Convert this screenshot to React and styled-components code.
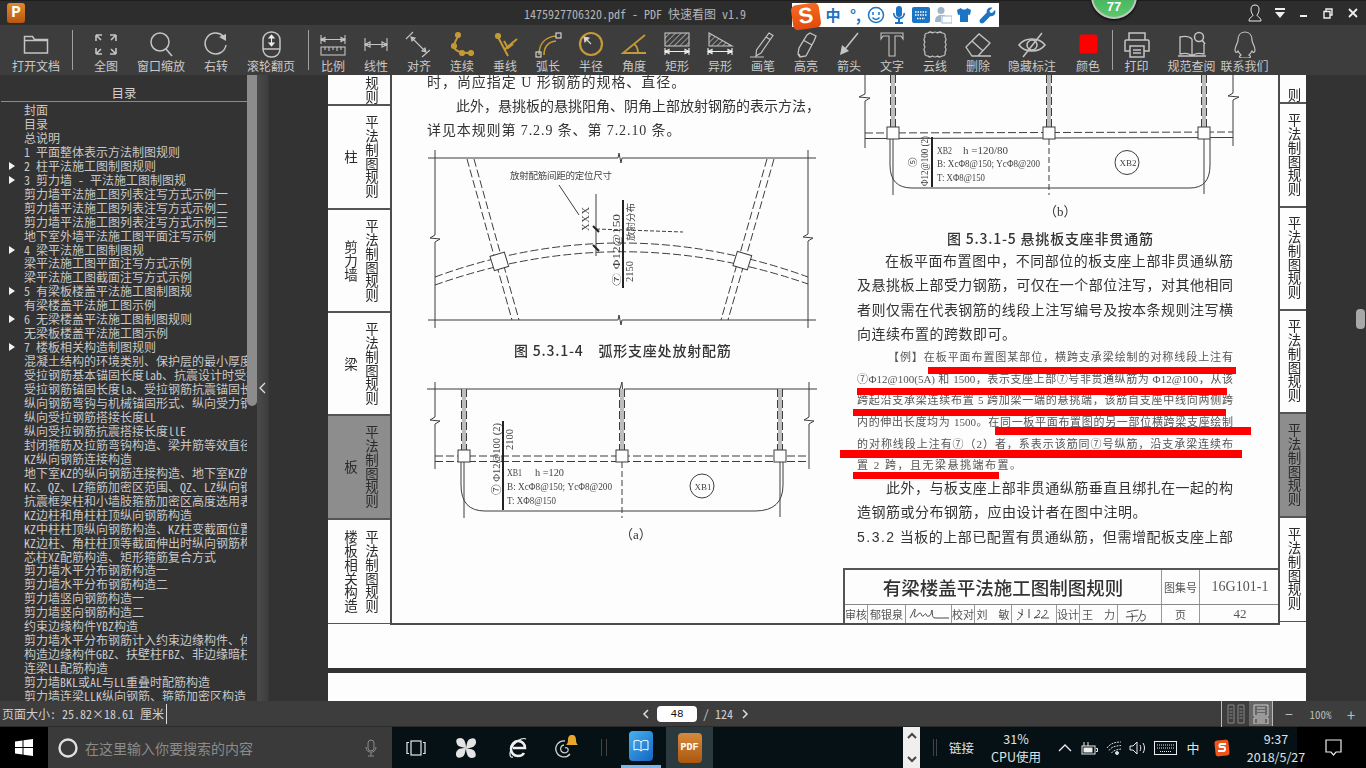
import styled, { createGlobalStyle } from 'styled-components';

const CJK = '"Noto Sans CJK SC", "Noto Sans", sans-serif';
const SCAN = '"Liberation Serif", "Noto Sans CJK SC", serif';

const Global = createGlobalStyle`
  html, body { margin: 0; padding: 0; background: #333; overflow: hidden; }
  * { box-sizing: border-box; }
`;

const Shell = styled.div`
  width: 1366px;
  height: 768px;
  overflow: hidden;
  position: relative;
  font-family: ${CJK};
  color: #d4d4d4;
  font-size: 12px;
`;

/* title bar */
const TitleBar = styled.div`
  height: 25px;
  background: #2d2d2d;
  border-top: 1px solid #1e1e1e;
  display: flex;
  align-items: center;
  position: relative;
`;
const AppLogo = styled.div`
  width: 18px;
  height: 20px;
  margin-left: 7px;
  border-radius: 3px;
  background: linear-gradient(#e08a2c, #b9560f);
  color: #fff;
  font: bold 16px/20px "Liberation Mono", monospace;
  text-align: center;
`;
const TitleText = styled.div`
  margin-left: 499px;
  font-size: 12px;
  color: #b4b4b4;
  font-feature-settings: "hwid";
  white-space: nowrap;
`;
const WinControls = styled.div`
  margin-left: auto;
  margin-right: 1px;
  display: flex;
`;
const WinBtn = styled.div`
  width: 24.4px;
  height: 24px;
  display: flex;
  align-items: center;
  justify-content: center;
  color: #eee;
`;
const ImeBar = styled.div`
  position: absolute;
  left: 792px;
  top: 2px;
  width: 207px;
  height: 24px;
  background: #fff;
  display: flex;
  align-items: center;
  color: #1b74c4;
  z-index: 5;
`;
const ImeLogo = styled.div`
  width: 28px;
  height: 25px;
  margin-top: 2px;
  border-radius: 5px;
  background: linear-gradient(#f5691f, #e24a0e);
  color: #fff;
  font: bold 22px/24px "Liberation Sans", sans-serif;
  text-align: center;
  transform: rotate(-8deg);
`;
const ImeCell = styled.div`
  width: ${(p) => p.$w}px;
  display: flex;
  justify-content: center;
  font-size: 15px;
  font-weight: 700;
  line-height: 20px;
`;
const ScoreBadge = styled.div`
  position: absolute;
  left: 1091px;
  top: -28px;
  width: 46px;
  height: 46px;
  border-radius: 50%;
  background: linear-gradient(#2f9f4c, #5cc86e);
  border: 2px solid #bfc7bf;
  box-shadow: 0 1px 3px #000;
  color: #fff;
  font: 700 13px/1 "Liberation Sans", sans-serif;
  display: flex;
  align-items: flex-end;
  justify-content: center;
  padding-bottom: 4px;
  z-index: 6;
`;

/* tool bar */
const ToolBar = styled.div`
  height: 50px;
  background: #3d3d3d;
  display: flex;
  align-items: flex-start;
`;
const Tool = styled.div`
  width: ${(p) => p.$w}px;
  flex: none;
  height: 50px;
  padding-top: 5px;
  display: flex;
  flex-direction: column;
  align-items: center;
  color: #c4c4c4;
  svg { display: block; }
`;
const ToolLabel = styled.div`
  font-size: 12px;
  line-height: 16px;
  white-space: nowrap;
  color: #c9c9c9;
`;
const ToolSep = styled.div`
  width: 1px;
  height: 40px;
  margin: 5px ${(p) => p.$after || 0}px 0 ${(p) => p.$before || 0}px;
  background: #a0a0a0;
  flex: none;
`;

/* middle */
const Main = styled.div`
  height: 626px;
  display: flex;
  background: #333;
  position: relative;
`;
const Sidebar = styled.div`
  width: 247px;
  flex: none;
  overflow: hidden;
  padding-left: 1px;
`;
const SideHead = styled.div`
  height: 27px;
  line-height: 36px;
  text-align: center;
  font-size: 12.5px;
  border-bottom: 1px solid #8b8b8b;
  color: #d0d0d0;
`;
const TocList = styled.div`
  padding-top: 1px;
`;
const TocRow = styled.div`
  height: 13.96px;
  line-height: 14px;
  padding-left: 23px;
  white-space: nowrap;
  position: relative;
  font-size: 12px;
  color: #c8c8c8;
  font-feature-settings: "hwid";
`;
const TocArrow = styled.i`
  position: absolute;
  left: 8px;
  top: 3px;
  border-left: 6px solid #f2f2f2;
  border-top: 4.5px solid transparent;
  border-bottom: 4.5px solid transparent;
`;
const TocNum = styled.span`
  display: inline-block;
  width: 12px;
`;
const SideThumbTrack = styled.div`
  width: 10px;
  flex: none;
`;
const SideThumb = styled.div`
  height: 331px;
  background: #8c8c8c;
  border-radius: 0 0 5px 5px;
`;
const SideGutter = styled.div`
  width: 71px;
  flex: none;
  display: flex;
  align-items: center;
  background: linear-gradient(90deg, #4a4a4a, #3e3e3e 11px, #333 12px);
`;
const Viewer = styled.div`
  width: 978px;
  flex: none;
  display: flex;
  flex-direction: column;
  gap: 5px;
`;
const Paper = styled.div`
  background: #fdfdfd;
  height: ${(p) => p.$h}px;
  flex: none;
  overflow: hidden;
`;
const Scan = styled.div`
  display: flex;
  height: 550px;
  filter: blur(0.35px);
  font-family: ${CJK};
  color: #3a3a3a;
`;
const TabColumn = styled.div`
  width: ${(p) => p.$w}px;
  flex: none;
`;
const Tab = styled.div`
  height: ${(p) => p.$h}px;
  background: ${(p) => (p.$active ? '#8d8d8d' : 'transparent')};
  border-bottom: ${(p) => (p.$last ? '1px' : '2px')} solid #555;
  display: flex;
  justify-content: ${(p) => (p.$side ? 'center' : 'flex-end')};
  align-items: ${(p) => (p.$cut ? 'flex-end' : 'center')};
  padding-right: ${(p) => (p.$side ? 0 : 11)}px;
  padding-left: ${(p) => (p.$side ? 3 : 0)}px;
  overflow: hidden;
  gap: 7px;
  color: #2b2b2b;
`;
const TabWord = styled.div`
  writing-mode: vertical-rl;
  text-orientation: upright;
  font-size: 13.5px;
  line-height: 14px;
  letter-spacing: 0.4px;
  white-space: nowrap;
`;
const Body = styled.div`
  width: 890px;
  flex: none;
  height: 550px;
  border-left: 2px solid #4c4c4c;
  border-right: 2px solid #4c4c4c;
  border-bottom: 2px solid #4c4c4c;
  display: flex;
  padding-left: 35px;
  overflow: hidden;
`;
const LeftCol = styled.div`
  width: 430px;
  flex: none;
  margin-top: -4px;
`;
const RightCol = styled.div`
  width: 421px;
  flex: none;
  display: flex;
  flex-direction: column;
`;
const Line = styled.div`
  width: ${(p) => p.$w || 388}px;
  height: ${(p) => p.$lh || 24}px;
  line-height: ${(p) => p.$lh || 24}px;
  padding-left: ${(p) => p.$indent || 0}px;
  margin-top: ${(p) => p.$top || 0}px;
  font-family: ${SCAN};
  font-size: ${(p) => p.$size || 14}px;
  letter-spacing: ${(p) => p.$ls || 0}px;
  white-space: nowrap;
  overflow: visible;
  color: ${(p) => p.$color || '#333'};
  text-align: ${(p) => (p.$fit ? 'justify' : 'left')};
  text-align-last: ${(p) => (p.$fit ? 'justify' : 'auto')};
  text-justify: inter-character;
`;
const SectionNo = styled.span`
  font-family: "Liberation Sans", sans-serif;
  letter-spacing: 1.5px;
`;
const Caption = styled.div`
  height: 20px;
  line-height: 20px;
  padding-left: ${(p) => p.$pad || 0}px;
  margin-top: ${(p) => p.$top || 0}px;
  font-size: 14px;
  font-weight: 500;
  letter-spacing: 0.8px;
  color: #333;
  white-space: pre;
`;
const SubCaption = styled.div`
  height: 20px;
  line-height: 20px;
  padding-left: ${(p) => p.$pad}px;
  font-family: ${SCAN};
  font-size: 13px;
  color: #333;
`;
const Figure = styled.svg`
  display: block;
  flex: none;
  line, path, rect, circle { stroke: #3d3d3d; fill: none; }
  .thick { stroke: #222; stroke-width: 2; }
  .dash { stroke-dasharray: 8 3; }
  .box { fill: #fdfdfd; }
  .rebar { fill: #bdbdbd; stroke: none; }
  text {
    font-family: "Liberation Serif", "Noto Sans CJK SC", serif;
    font-size: 10.5px;
    fill: #444;
  }
  .small { font-size: 9.5px; }
  .tiny { font-size: 9px; }
`;

/* title block of the drawing sheet */
const Sheet = styled.div`
  width: 437px;
  margin-left: -14px;
  margin-top: auto;
  border-top: 2px solid #555;
  border-left: 2px solid #555;
  height: 55px;
  display: flex;
  flex-direction: column;
  color: #444;
`;
const SheetRow = styled.div`
  display: flex;
  height: ${(p) => p.$h}px;
  flex: none;
  border-bottom: ${(p) => (p.$top ? '1px solid #888' : 'none')};
`;
const SheetCell = styled.div`
  width: ${(p) => p.$w}px;
  flex: none;
  display: flex;
  align-items: center;
  justify-content: center;
  white-space: nowrap;
  font-family: ${(p) => (p.$serif ? SCAN : CJK)};
  font-size: ${(p) => p.$size || 11}px;
  font-weight: ${(p) => p.$weight || 400};
  border-right: 1px solid #999;
  color: ${(p) => p.$color || '#555'};
  &:last-child { border-right: none; }
`;
const MarkLayer = styled.svg`
  position: absolute;
  left: 0;
  top: 0;
  pointer-events: none;
`;
const PageThumb = styled.div`
  position: absolute;
  left: 1356px;
  top: 234px;
  width: 9px;
  height: 20px;
  border-radius: 4px;
  background: #a8a8a8;
`;

/* status bar */
const StatusBar = styled.div`
  height: 26px;
  background: #3d3d3d;
  border-bottom: 1px solid #2a2a2a;
  display: flex;
  align-items: center;
  color: #cfcfcf;
  position: relative;
`;
const PageSize = styled.div`
  width: 167px;
  flex: none;
  padding-left: 2px;
  height: 20px;
  line-height: 20px;
  font-size: 12px;
  border-right: 1px solid #ddd;
  white-space: nowrap;
  font-feature-settings: "hwid";
`;
const Pager = styled.div`
  flex: none;
  margin-left: 474px;
  display: flex;
  align-items: center;
  gap: 6px;
  white-space: nowrap;
  svg { flex: none; }
`;
const PageInput = styled.div`
  width: 40px;
  height: 16px;
  flex: none;
  background: #fff;
  border-radius: 4px;
  color: #111;
  text-align: center;
  line-height: 16px;
  font-family: "Liberation Mono", monospace;
  font-size: 11px;
`;
const PageTotal = styled.div`
  width: 31px;
  flex: none;
  font-size: 12px;
  font-feature-settings: "hwid";
`;
const ViewGroup = styled.div`
  margin-left: auto;
  display: flex;
  align-items: center;
  height: 26px;
  color: #bbb;
`;
const ViewBtn = styled.div`
  width: ${(p) => p.$w}px;
  height: ${(p) => (p.$active ? 25 : 26)}px;
  display: flex;
  align-items: center;
  justify-content: center;
  background: ${(p) => (p.$active ? '#666' : 'transparent')};
  border-left: ${(p) => (p.$sep ? '1px solid #bbb' : 'none')};
  border-right: ${(p) => (p.$end ? '1px solid #bbb' : 'none')};
  font-size: ${(p) => p.$size || 11}px;
  font-feature-settings: "hwid";
  white-space: nowrap;
`;

/* windows task bar */
const TaskBar = styled.div`
  height: 41px;
  display: flex;
  align-items: stretch;
  background: linear-gradient(90deg, #051114 1297px, #000 1297px);
  color: #e2e2e2;
`;
const StartBtn = styled.div`
  width: 48px;
  flex: none;
  background: #000;
  display: flex;
  align-items: center;
  justify-content: center;
`;
const SearchBox = styled.div`
  width: 344px;
  flex: none;
  background: #3a3a3a;
  display: flex;
  align-items: center;
  padding-left: 10px;
  color: #8b8b8b;
  font-size: 14px;
  gap: 7px;
`;
const MicSlot = styled.div`
  margin-left: auto;
  margin-right: 15px;
  display: flex;
`;
const TaskBtn = styled.div`
  width: ${(p) => p.$w}px;
  flex: none;
  display: flex;
  align-items: center;
  justify-content: center;
  position: relative;
  background: ${(p) => (p.$pressed ? '#2b3a3f' : 'transparent')};
  border-bottom: ${(p) => (p.$active ? '3px solid #7db7e8' : 'none')};
  margin-left: ${(p) => p.$gap || 0}px;
`;
const TaskDivider = styled.div`
  width: 33px;
  flex: none;
  display: flex;
  align-items: center;
  padding-left: 13px;
  &::before {
    content: '';
    width: 4px;
    height: 17px;
    border-left: 1px solid #444;
    border-right: 1px solid #444;
  }
`;
const AppTile = styled.div`
  width: ${(p) => p.$w}px;
  height: 30px;
  border-radius: 4px;
  background: ${(p) => p.$bg};
  color: #fff;
  font: 700 10px/30px "Liberation Mono", monospace;
  text-align: center;
  overflow: hidden;
`;
const Spacer = styled.div`
  flex: ${(p) => (p.$w ? `0 0 ${p.$w}px` : 1)};
`;
const ScrollWidget = styled.div`
  width: 17px;
  flex: none;
  background: #efefef;
  color: #444;
  display: flex;
  flex-direction: column;
  justify-content: space-between;
  align-items: center;
  padding: 5px 0;
`;
const Tray = styled.div`
  width: ${(p) => p.$w}px;
  flex: none;
  display: flex;
  flex-direction: column;
  align-items: center;
  justify-content: center;
  line-height: 18px;
  font-size: ${(p) => p.$size || 12.5}px;
  margin-left: ${(p) => p.$gap || 0}px;
  white-space: nowrap;
`;
const TrayDivider = styled.div`
  width: 4px;
  height: 17px;
  margin: auto 0 auto 13px;
  border-left: 1px solid #444;
  border-right: 1px solid #444;
  flex: none;
`;

const toolIcons = {
  folder: <path d="M4.5 23V6.5h8l2 3h13V23zM4.5 10.5h23" strokeWidth="1.5" />,
  fit: (
    <path
      d="M6 5h6M6 5v6M6 5l5 5M26 5h-6M26 5v6M26 5l-5 5M6 24h6M6 24v-6M6 24l5-5M26 24h-6M26 24v-6M26 24l-5-5"
      strokeWidth="1.6"
    />
  ),
  zoom: (
    <>
      <circle cx="15" cy="12" r="9" strokeWidth="1.5" />
      <path d="M21 19l6 7" strokeWidth="1.6" />
    </>
  ),
  rotate: (
    <>
      <path d="M23 6A10.5 10.5 0 1 0 26 15" strokeWidth="1.5" />
      <path d="M19 7l7-3 0 7z" fill="currentColor" stroke="none" />
    </>
  ),
  mouse: (
    <>
      <rect x="8" y="2" width="17" height="25" rx="8" strokeWidth="1.5" />
      <path d="M8 19h17" strokeWidth="1.5" />
      <path d="M16.5 6v9M14 8l2.5-3 2.5 3zM14 13l2.5 3 2.5-3z" stroke="#eee" fill="#eee" />
    </>
  ),
  ratio: (
    <>
      <path d="M4 5v9M28 5v9M4 9.5h24M4 9.5l4-2v4zM28 9.5l-4-2v4z" />
      <rect x="4" y="17" width="24" height="8" />
      <path d="M8 17v3M12 17v4M16 17v3M20 17v4M24 17v3" />
    </>
  ),
  linear: <path d="M5 8v13M27 8v13M5 14.5h22M5 14.5l5-2.500v5zM27 14.5l-5-2.500v5z" />,
  align: <path d="M3 9l7-7M19 27l8-7M8 7l15 15M8 7l1 4 3-3zM23 22l-1-4-3 3z" />,
  chain: (
    <>
      <path d="M12 5C11 11 7 13 8 17s7 6 16 6" stroke="#c59a35" strokeWidth="2" />
      <circle cx="12" cy="5" r="2.500" fill="#c59a35" stroke="#c59a35" />
      <circle cx="8" cy="16" r="2.500" fill="#c59a35" stroke="#c59a35" />
      <circle cx="16" cy="23" r="2.500" fill="#c59a35" stroke="#c59a35" />
      <circle cx="25" cy="23" r="2.500" fill="#c59a35" stroke="#c59a35" />
    </>
  ),
  perp: (
    <>
      <path d="M9 7l10 19M28 9L15 20M15 11l4 7 5-4" stroke="#c59a35" strokeWidth="2" />
      <circle cx="9" cy="6" r="2.500" fill="#c59a35" stroke="#c59a35" />
    </>
  ),
  arc: (
    <>
      <path d="M7 25C7 14 13 7 24 6M12 25c0-8 4-13 12-14" stroke="#c59a35" strokeWidth="1.6" />
      <rect x="4" y="22" width="5" height="5" stroke="#ddd" />
      <rect x="24" y="3" width="5" height="5" stroke="#ddd" />
    </>
  ),
  radius: (
    <>
      <circle cx="16" cy="14" r="11" stroke="#c59a35" strokeWidth="2.200" />
      <path d="M16 14L9 7M9 7l5 1-4 4z" stroke="#d6d6d6" fill="#d6d6d6" />
    </>
  ),
  angle: <path d="M27 5L5 23h23M16 14c3 2 4 5 4 9" stroke="#c59a35" strokeWidth="1.800" />,
  rect: (
    <>
      <rect x="4" y="3" width="24" height="13" fill="url(#hatch)" />
      <path d="M4 18v7M28 18v7M4 21.5h24M4 21.5l4-2v4zM28 21.5l-4-2v4z" stroke="#eee" />
    </>
  ),
  skew: (
    <>
      <path d="M5 3l23 13H5z" fill="url(#hatch)" />
      <path d="M4 18v7M28 18v7M4 21.5h24M4 21.5l4-2v4zM28 21.5l-4-2v4z" stroke="#eee" />
    </>
  ),
  pen: <path d="M22 3l4 2.500L14 23l-5 3 .5-6zM19 7l4 2.500M3 27h14" strokeWidth="1.200" />,
  marker: <path d="M20 3l6 3-2 5-8 15-6 1-2-3 1-6 8-13zM13 10l9 5M10 26l-1-2" strokeWidth="1.300" />,
  arrow: (
    <>
      <path d="M25 3L12 19" strokeWidth="1.500" />
      <path d="M7 25l2-10 7 6z" fill="currentColor" stroke="none" />
    </>
  ),
  text: <path d="M5 3h22v6l-2-3h-6v20h-6V6H7L5 9z" strokeWidth="1.100" />,
  cloud: (
    <path
      d="M9 3q2.500-2 4.500 0q2.500-2 5 0q2.500-2 4.500 0q4 0 3 4q2 2.500 0 5q2 2.500 0 5q2 2.500 0 5q1 4-3 4q-2.500 2-4.500 0q-2.500 2-5 0q-2.500 2-4.500 0q-4 0-3-4q-2-2.500 0-5q-2-2.500 0-5q-2-2.500 0-5q-1-4 3-4z"
      strokeWidth="1.200"
    />
  ),
  eraser: <path d="M4 17L17 4l11 9L16 26H10zM10 11l11 10M16 26h13" strokeWidth="1.300" />,
  hide: (
    <>
      <path d="M3 15c6-8 20-8 26 0c-6 8-20 8-26 0z" strokeWidth="1.500" />
      <circle cx="16" cy="15" r="5" strokeWidth="1.500" />
      <path d="M26 3L7 27" strokeWidth="1.500" />
    </>
  ),
  swatch: <rect x="8" y="5" width="17" height="18" rx="2" fill="#ff0000" stroke="#ff0000" />,
  print: (
    <path
      d="M8 10V3h16v7M5 10h22a1.500 1.500 0 0 1 1 1.500V21h-5M9 21H4v-9.500A1.500 1.500 0 0 1 5 10M9 16h14v11H9zM12 20h8M12 23h8"
      strokeWidth="1.500"
    />
  ),
  book: (
    <>
      <path d="M16 9c-3-3-8-3-12-2v17c4-1 9-1 12 2c3-3 8-3 12-2V14M16 9v17M2 26h28" strokeWidth="1.300" />
      <circle cx="23" cy="7" r="4.500" strokeWidth="1.500" />
      <path d="M26 10l3 4" strokeWidth="1.500" />
    </>
  ),
  qq: (
    <path
      d="M16 2c-5 0-7 4-7 8c0 3-3 6-3 10c0 3 2 3 3 1c1 2 2 3 3 4c-2 1-2 3 1 3h6c3 0 3-2 1-3c1-1 2-2 3-4c1 2 3 2 3-1c0-4-3-7-3-10c0-4-2-8-7-8z"
      strokeWidth="1.200"
    />
  ),
};

const tools = [
  { label: '打开文档', icon: 'folder', w: 72 },
  { sep: true },
  { label: '全图', icon: 'fit', w: 66 },
  { label: '窗口缩放', icon: 'zoom', w: 44 },
  { label: '右转', icon: 'rotate', w: 66 },
  { label: '滚轮翻页', icon: 'mouse', w: 44 },
  { sep: true, before: 15, after: 2.5 },
  { label: '比例', icon: 'ratio', w: 43 },
  { label: '线性', icon: 'linear', w: 43 },
  { label: '对齐', icon: 'align', w: 43 },
  { label: '连续', icon: 'chain', w: 43 },
  { label: '垂线', icon: 'perp', w: 43 },
  { label: '弧长', icon: 'arc', w: 43 },
  { label: '半径', icon: 'radius', w: 43 },
  { label: '角度', icon: 'angle', w: 43 },
  { label: '矩形', icon: 'rect', w: 43 },
  { label: '异形', icon: 'skew', w: 43 },
  { label: '画笔', icon: 'pen', w: 43 },
  { label: '高亮', icon: 'marker', w: 43 },
  { label: '箭头', icon: 'arrow', w: 43 },
  { label: '文字', icon: 'text', w: 43 },
  { label: '云线', icon: 'cloud', w: 43 },
  { label: '删除', icon: 'eraser', w: 43 },
  { label: '隐藏标注', icon: 'hide', w: 65 },
  { label: '颜色', icon: 'swatch', w: 47 },
  { sep: true },
  { label: '打印', icon: 'print', w: 48 },
  { label: '规范查阅', icon: 'book', w: 62 },
  { label: '联系我们', icon: 'qq', w: 44 },
];

const toc = [
  { t: '封面' },
  { t: '目录' },
  { t: '总说明' },
  { n: '1', t: '平面整体表示方法制图规则' },
  { n: '2', t: '柱平法施工图制图规则', open: true },
  { n: '3', t: '剪力墙 - 平法施工图制图规', open: true },
  { t: '剪力墙平法施工图列表注写方式示例一' },
  { t: '剪力墙平法施工图列表注写方式示例二' },
  { t: '剪力墙平法施工图列表注写方式示例三' },
  { t: '地下室外墙平法施工图平面注写示例' },
  { n: '4', t: '梁平法施工图制图规', open: true },
  { t: '梁平法施工图平面注写方式示例' },
  { t: '梁平法施工图截面注写方式示例' },
  { n: '5', t: '有梁板楼盖平法施工图制图规', open: true },
  { t: '有梁楼盖平法施工图示例' },
  { n: '6', t: '无梁楼盖平法施工图制图规则', open: true },
  { t: '无梁板楼盖平法施工图示例' },
  { n: '7', t: '楼板相关构造制图规则', open: true },
  { t: '混凝土结构的环境类别、保护层的最小厚度' },
  { t: '受拉钢筋基本锚固长度lab、抗震设计时受拉钢筋' },
  { t: '受拉钢筋锚固长度la、受拉钢筋抗震锚固长度laE' },
  { t: '纵向钢筋弯钩与机械锚固形式、纵向受力钢筋' },
  { t: '纵向受拉钢筋搭接长度LL' },
  { t: '纵向受拉钢筋抗震搭接长度llE' },
  { t: '封闭箍筋及拉筋弯钩构造、梁并筋等效直径' },
  { t: 'KZ纵向钢筋连接构造' },
  { t: '地下室KZ的纵向钢筋连接构造、地下室KZ的' },
  { t: 'KZ、QZ、LZ箍筋加密区范围、QZ、LZ纵向钢筋' },
  { t: '抗震框架柱和小墙肢箍筋加密区高度选用表' },
  { t: 'KZ边柱和角柱柱顶纵向钢筋构造' },
  { t: 'KZ中柱柱顶纵向钢筋构造、KZ柱变截面位置' },
  { t: 'KZ边柱、角柱柱顶等截面伸出时纵向钢筋构造' },
  { t: '芯柱XZ配筋构造、矩形箍筋复合方式' },
  { t: '剪力墙水平分布钢筋构造一' },
  { t: '剪力墙水平分布钢筋构造二' },
  { t: '剪力墙竖向钢筋构造一' },
  { t: '剪力墙竖向钢筋构造二' },
  { t: '约束边缘构件YBZ构造' },
  { t: '剪力墙水平分布钢筋计入约束边缘构件、体积' },
  { t: '构造边缘构件GBZ、扶壁柱FBZ、非边缘暗柱' },
  { t: '连梁LL配筋构造' },
  { t: '剪力墙BKL或AL与LL重叠时配筋构造' },
  { t: '剪力墙连梁LLK纵向钢筋、箍筋加密区构造' },
];

const leftTabs = [
  { h: 31, word: '', cut: true },
  { h: 104, word: '柱' },
  { h: 103, word: '剪力墙' },
  { h: 103, word: '梁' },
  { h: 104, word: '板', active: true },
  { h: 104, word: '楼板相关构造', last: true },
];
const rightTabs = [28.5, 104, 103, 103, 104, 104];

// red pen strokes the user drew over the example paragraph
const marks = [
  [928, 367, 308, 7],
  [857, 388, 370, 7],
  [853, 409, 373, 7],
  [995, 427, 256, 8],
  [840, 450, 402, 8],
  [853, 472, 146, 7],
];

const signCells = [
  { w: 23, t: '审核' },
  { w: 38, t: '郁银泉' },
  { w: 46, sign: 'M3 13c3-5 4-9 5-9s-2 8 0 8 3-4 5-4 1 4 3 3 2-3 3-2 0 3 3 2 2-6 3-6-1 8 3 8h14' },
  { w: 23, t: '校对' },
  { w: 37, t: '刘　敏' },
  { w: 45, sign: 'M6 7l5 3M10 4c1 4-1 9-5 11M17 4v9M25 6c3-2 4 1 1 4l-4 3 6-1M32 6c3-2 4 1 1 4l-4 3 8 0' },
  { w: 23, t: '设计' },
  { w: 38, t: '王　力' },
  { w: 44, sign: 'M9 7c5-1 9-2 12-2M14 8c1 2 1 7 0 9M8 12c5 0 9-1 12-1M24 5c0 5-2 9-5 12M24 10c4-2 5 2 3 5c-2 2-4 1-4 0' },
];

function ToolGlyph({ name }) {
  return (
    <svg width="32" height="28" viewBox="0 0 32 28" fill="none" stroke="currentColor" strokeWidth="1.100">
      {toolIcons[name]}
    </svg>
  );
}

function Squiggle({ d }) {
  return (
    <svg width="44" height="18" viewBox="0 0 44 18" fill="none" stroke="#333" strokeWidth="0.900">
      <path d={d} />
    </svg>
  );
}

function Support({ x, y0, y1 }) {
  return (
    <>
      <rect x={x - 2} y={y0} width="4" height={y1 - y0} className="rebar" />
      <line x1={x - 2.5} y1={y0} x2={x - 2.5} y2={y1} className="dash" />
      <line x1={x + 2.5} y1={y0} x2={x + 2.5} y2={y1} className="dash" />
    </>
  );
}

function FigureArc() {
  return (
    <Figure width="400" height="197" viewBox="427 143 400 197">
      <path d="M428 158H618l1-5 2 10 1-5H816M428 320H618l1-5 2 10 1-5H816" />
      <path d="M435 150V235l-5 3 10 1-5 3V328M808 150V234l-5 3 10 1-5 3V328" />
      <line x1="467" y1="159" x2="512" y2="320" className="dash" />
      <line x1="474" y1="159" x2="519" y2="320" className="dash" />
      <line x1="767" y1="159" x2="721" y2="320" className="dash" />
      <line x1="774" y1="159" x2="728" y2="320" className="dash" />
      <path d="M435 277Q621 209 808 277" className="dash" />
      <path d="M435 285Q621 219 808 284" className="dash" />
      <rect x="492" y="254" width="15" height="15" className="box" transform="rotate(-17 499 262)" />
      <rect x="735" y="253" width="15" height="15" className="box" transform="rotate(17 742 260)" />
      <line x1="559" y1="185" x2="579" y2="215" />
      <line x1="596" y1="194" x2="596" y2="256" />
      <line x1="623" y1="200" x2="623" y2="288" className="thick" />
      <line x1="596" y1="229" x2="683" y2="232" strokeDasharray="4 2" />
      <path d="M593 226l6 6M593 245l6 6" className="thick" />
      <text x="510" y="179" className="small" textLength="102">放射配筋间距的定位尺寸</text>
      <text transform="rotate(-90 589 231)" x="589" y="231" textLength="24">XXX</text>
      <text transform="rotate(-90 620 286)" x="620" y="286" className="small" textLength="72" lengthAdjust="spacingAndGlyphs">⑦ Φ12@150</text>
      <text transform="rotate(-90 633 282)" x="633" y="282">2150</text>
      <text transform="rotate(-90 634 241)" x="634" y="241" className="small">放射分布</text>
    </Figure>
  );
}

function FigureA() {
  return (
    <Figure width="400" height="165" viewBox="427 360 400 165">
      <path d="M427 389H620l2-7 1 14 1-7H817" />
      <path d="M435 382V417l-5 3 10 1-5 3V469M809 382V417l-5 3 10 1-5 3V469" />
      {[464, 622, 780].map((x) => (
        <Support key={x} x={x} y0={389} y1={450} />
      ))}
      <line x1="435" y1="456" x2="809" y2="456" className="dash" />
      <line x1="435" y1="461.500" x2="809" y2="461.500" className="dash" />
      {[464, 622, 780].map((x) => (
        <rect key={x} x={x - 6} y="450" width="12" height="12" className="box" />
      ))}
      <line x1="464" y1="462" x2="464" y2="518" />
      <line x1="622" y1="462" x2="622" y2="518" strokeDasharray="6 3" />
      <line x1="780" y1="462" x2="780" y2="517" />
      <path d="M461 462V485Q461 511 485 511H755Q783 511 783 485V462" />
      <line x1="503" y1="421" x2="503" y2="510" className="thick" />
      <text x="507" y="476" textLength="15" lengthAdjust="spacingAndGlyphs">XB1</text>
      <text x="535" y="476" textLength="29" lengthAdjust="spacingAndGlyphs">h =120</text>
      <text x="507" y="490" textLength="105" lengthAdjust="spacingAndGlyphs">B: XcΦ8@150; YcΦ8@200</text>
      <text x="507" y="504" textLength="49" lengthAdjust="spacingAndGlyphs">T: XΦ8@150</text>
      <circle cx="702" cy="486" r="12" />
      <text x="694.500" y="489.500" className="tiny">XB1</text>
      <text transform="rotate(-90 500 495)" x="500" y="495" textLength="72" lengthAdjust="spacingAndGlyphs">⑦ Φ12@100 (2)</text>
      <text transform="rotate(-90 513 450)" x="513" y="450">2100</text>
    </Figure>
  );
}

function FigureB() {
  return (
    <Figure width="390" height="127" viewBox="857 75 390 127">
      <path d="M865 75V94l-6 3 11 1-5 3V148M1233 75V93l-5 3 11 1-6 3V146" />
      {[893, 1049, 1204].map((x) => (
        <Support key={x} x={x} y0={75} y1={127} />
      ))}
      <line x1="865" y1="133" x2="1233" y2="132" className="dash" />
      <line x1="865" y1="138.500" x2="1233" y2="137.500" />
      {[893, 1049, 1204].map((x) => (
        <rect key={x} x={x - 6} y="127" width="12" height="12" className="box" />
      ))}
      <line x1="893" y1="139" x2="893" y2="195" />
      <line x1="1049" y1="139" x2="1049" y2="195" strokeDasharray="6 3" />
      <line x1="1204" y1="139" x2="1204" y2="194" />
      <path d="M890 139V165Q890 188 912 188H1190Q1210 188 1210 165V139" />
      <line x1="932" y1="137" x2="932" y2="187" className="thick" />
      <text x="937" y="154" textLength="15" lengthAdjust="spacingAndGlyphs">XB2</text>
      <text x="963" y="154" textLength="45" lengthAdjust="spacingAndGlyphs">h =120/80</text>
      <text x="937" y="167" textLength="103" lengthAdjust="spacingAndGlyphs">B: XcΦ8@150; YcΦ8@200</text>
      <text x="937" y="181" textLength="48" lengthAdjust="spacingAndGlyphs">T: XΦ8@150</text>
      <circle cx="1127" cy="162.500" r="12" />
      <text x="1119.500" y="166" className="tiny">XB2</text>
      <text transform="rotate(-90 928 186)" x="928" y="186" className="small" textLength="50" lengthAdjust="spacingAndGlyphs">Φ12@100 (2)</text>
      <text transform="rotate(-90 916 167)" x="916" y="167" className="small">⑤</text>
    </Figure>
  );
}

export default function App() {
  return (
    <Shell>
      <Global />
      <TitleBar>
        <AppLogo>P</AppLogo>
        <TitleText>1475927706320.pdf - PDF 快速看图 v1.9</TitleText>
        <WinControls>
          <WinBtn>
            <svg width="14" height="18" viewBox="0 0 14 18" fill="none" stroke="currentColor">
              <path d="M7 1c-3 0-4 2-4 4.500S4 10 5 11c0 2-4 2-4 6h12c0-4-4-4-4-6 1-1 2-3 2-5.500S10 1 7 1z" />
            </svg>
          </WinBtn>
          <WinBtn>
            <svg width="12" height="12" viewBox="0 0 12 12" fill="currentColor">
              <path d="M1 1h10v2H1zM1 5h10L6 11z" />
            </svg>
          </WinBtn>
          <WinBtn>
            <svg width="10" height="10" viewBox="0 0 10 10" fill="currentColor">
              <path d="M1 7h7v2H1z" />
            </svg>
          </WinBtn>
          <WinBtn>
            <svg width="10" height="11" viewBox="0 0 10 11" fill="none" stroke="currentColor" strokeWidth="1.400">
              <path d="M3 3V1h6v6H7M1 3.500h6v6.500H1z" />
            </svg>
          </WinBtn>
          <WinBtn>
            <svg width="10" height="10" viewBox="0 0 10 10" fill="none" stroke="currentColor" strokeWidth="1.800">
              <path d="M1 1l8 8M9 1L1 9" />
            </svg>
          </WinBtn>
        </WinControls>
        <ImeBar>
          <ImeLogo>S</ImeLogo>
          <ImeCell $w={27}>中</ImeCell>
          <ImeCell $w={18}>°,</ImeCell>
          <ImeCell $w={24}>
            <svg width="18" height="18" viewBox="0 0 18 18" fill="none" stroke="currentColor" strokeWidth="1.500">
              <circle cx="9" cy="9" r="7.500" />
              <path d="M6 6v3M12 6v3M5.500 11.500c2 2.500 5 2.500 7 0" />
            </svg>
          </ImeCell>
          <ImeCell $w={22}>
            <svg width="14" height="20" viewBox="0 0 14 20" fill="currentColor">
              <rect x="4" y="1" width="6" height="11" rx="3" />
              <path d="M1 8h1.500c0 6 9 6 9 0H13c0 4-3 6-5 6.300V17h3v2H3v-2h3v-2.700C4 14 1 12 1 8z" />
            </svg>
          </ImeCell>
          <ImeCell $w={22}>
            <svg width="18" height="16" viewBox="0 0 18 16">
              <rect width="18" height="16" rx="2" fill="currentColor" />
              <path d="M3 5h12M3 8h12M5 11.500h8" stroke="#fff" strokeWidth="1.300" strokeDasharray="1.500 1" />
            </svg>
          </ImeCell>
          <ImeCell $w={22}>
            <svg width="18" height="18" viewBox="0 0 18 18" fill="#9fb5c9">
              <circle cx="7" cy="4.500" r="3.500" />
              <path d="M1 16c0-5 2-7 6-7s4 1 5 1H7v6z" />
              <rect x="8" y="10" width="10" height="7" fill="#fff" stroke="#9fb5c9" />
            </svg>
          </ImeCell>
          <ImeCell $w={22}>
            <svg width="16" height="16" viewBox="0 0 16 16" fill="currentColor">
              <path d="M5 1L1 3l1 5 2-.5V15h8V7.500L14 8l1-5-4-2c-.5 2-5 2-6 0z" />
            </svg>
          </ImeCell>
          <ImeCell $w={24}>
            <svg width="17" height="17" viewBox="0 0 17 17" fill="currentColor">
              <path d="M16 3l-3 3-2-.5L10.500 3.500 13.500.8C10-.6 7 2 7.800 5.500L1 12.500C-.5 15 2 17.500 4.500 16l7-7C14.500 10 17.500 7 16 3z" />
            </svg>
          </ImeCell>
        </ImeBar>
        <ScoreBadge>77</ScoreBadge>
      </TitleBar>

      <ToolBar>
        <svg width="0" height="0" style={{ position: 'absolute' }}>
          <pattern id="hatch" width="4" height="4" patternUnits="userSpaceOnUse" patternTransform="rotate(45)">
            <line x1="0" y1="0" x2="0" y2="4" stroke="#bbb" strokeWidth="1.400" />
          </pattern>
        </svg>
        {tools.map((tool, i) =>
          tool.sep ? (
            <ToolSep key={i} $before={tool.before} $after={tool.after} />
          ) : (
            <Tool key={tool.label} $w={tool.w}>
              <ToolGlyph name={tool.icon} />
              <ToolLabel>{tool.label}</ToolLabel>
            </Tool>
          )
        )}
      </ToolBar>

      <Main>
        <Sidebar>
          <SideHead>目录</SideHead>
          <TocList>
            {toc.map((row) => (
              <TocRow key={row.t}>
                {row.open && <TocArrow />}
                {row.n && <TocNum>{row.n}</TocNum>}
                {row.t}
              </TocRow>
            ))}
          </TocList>
        </Sidebar>
        <SideThumbTrack>
          <SideThumb />
        </SideThumbTrack>
        <SideGutter>
          <svg width="11" height="14" viewBox="0 0 11 14" fill="none" stroke="#e0e0e0" strokeWidth="1.300">
            <path d="M8 2L3 7l5 5" />
          </svg>
        </SideGutter>
        <Viewer>
          <Paper $h={593}>
            <Scan>
              <TabColumn $w={62}>
                {leftTabs.map((tab, i) => (
                  <Tab key={i} $h={tab.h} $active={tab.active} $last={tab.last} $cut={tab.cut}>
                    {tab.word && <TabWord>{tab.word}</TabWord>}
                    <TabWord>{tab.cut ? '规则' : '平法制图规则'}</TabWord>
                  </Tab>
                ))}
              </TabColumn>
              <Body>
                <LeftCol>
                  <Line $ls={0.95}>时，尚应指定 U 形钢筋的规格、直径。</Line>
                  <Line $fit $indent={29}>此外，悬挑板的悬挑阳角、阴角上部放射钢筋的表示方法，</Line>
                  <Line $ls={0.9}>详见本规则第 7.2.9 条、第 7.2.10 条。</Line>
                  <FigureArc />
                  <Caption $pad={87}>图 5.3.1-4　弧形支座处放射配筋</Caption>
                  <FigureA />
                  <SubCaption $pad={193}>（a）</SubCaption>
                </LeftCol>
                <RightCol>
                  <FigureB />
                  <SubCaption $pad={187}>（b）</SubCaption>
                  <Caption $pad={90} $top={6}>图 5.3.1-5 悬挑板支座非贯通筋</Caption>
                  <Line $w={376} $fit $indent={28} $lh={24.300} $top={2}>在板平面布置图中，不同部位的板支座上部非贯通纵筋</Line>
                  <Line $w={376} $fit $lh={24.300}>及悬挑板上部受力钢筋，可仅在一个部位注写，对其他相同</Line>
                  <Line $w={376} $fit $lh={24.300}>者则仅需在代表钢筋的线段上注写编号及按本条规则注写横</Line>
                  <Line $w={376} $ls={0.500} $lh={24.300}>向连续布置的跨数即可。</Line>
                  <Line $w={376} $fit $indent={31} $size={11} $lh={21.600} $color="#555">【例】在板平面布置图某部位，横跨支承梁绘制的对称线段上注有</Line>
                  <Line $w={376} $fit $size={11} $lh={21.600} $color="#555">⑦Φ12@100(5A) 和 1500，表示支座上部⑦号非贯通纵筋为 Φ12@100，从该</Line>
                  <Line $w={376} $fit $size={11} $lh={21.600} $color="#555">跨起沿支承梁连续布置 5 跨加梁一端的悬挑端，该筋自支座中线向两侧跨</Line>
                  <Line $w={376} $fit $size={11} $lh={21.600} $color="#555">内的伸出长度均为 1500。在同一板平面布置图的另一部位横跨梁支座绘制</Line>
                  <Line $w={376} $fit $size={11} $lh={21.600} $color="#555">的对称线段上注有⑦（2）者，系表示该筋同⑦号纵筋，沿支承梁连续布</Line>
                  <Line $w={376} $ls={1.500} $size={11} $lh={21.600} $color="#555">置 2 跨，且无梁悬挑端布置。</Line>
                  <Line $w={376} $fit $indent={29}>此外，与板支座上部非贯通纵筋垂直且绑扎在一起的构</Line>
                  <Line $w={376} $ls={0.500}>造钢筋或分布钢筋，应由设计者在图中注明。</Line>
                  <Line $w={376} $fit><SectionNo>5.3.2</SectionNo> 当板的上部已配置有贯通纵筋，但需增配板支座上部</Line>
                  <Sheet>
                    <SheetRow $h={35} $top>
                      <SheetCell $w={317} $size={18.500} $weight={500} $color="#333">有梁楼盖平法施工图制图规则</SheetCell>
                      <SheetCell $w={38}>图集号</SheetCell>
                      <SheetCell $w={80} $serif $size={14}>16G101-1</SheetCell>
                    </SheetRow>
                    <SheetRow $h={18}>
                      {signCells.map((cell, i) => (
                        <SheetCell key={i} $w={cell.w}>
                          {cell.sign ? <Squiggle d={cell.sign} /> : cell.t}
                        </SheetCell>
                      ))}
                      <SheetCell $w={38}>页</SheetCell>
                      <SheetCell $w={80} $serif $size={13}>42</SheetCell>
                    </SheetRow>
                  </Sheet>
                </RightCol>
              </Body>
              <TabColumn $w={26}>
                {rightTabs.map((h, i) => (
                  <Tab key={i} $h={h} $side $active={i === 4} $cut={i === 0} $last={i === 5}>
                    <TabWord>{i === 0 ? '则' : '平法制图规则'}</TabWord>
                  </Tab>
                ))}
              </TabColumn>
            </Scan>
          </Paper>
          <Paper $h={28} />
        </Viewer>
        <MarkLayer width="1366" height="626" viewBox="0 75 1366 626">
          {marks.map(([x, y, w, h]) => (
            <rect key={y} x={x} y={y} width={w} height={h} fill="#ff0000" />
          ))}
        </MarkLayer>
        <PageThumb />
      </Main>

      <StatusBar>
        <PageSize>页面大小: 25.82×18.61 厘米</PageSize>
        <Pager>
          <svg width="10" height="12" viewBox="0 0 10 12" fill="none" stroke="#ddd" strokeWidth="1.500">
            <path d="M7 2L3 6l4 4" />
          </svg>
          <PageInput>48</PageInput>
          <PageTotal>/ 124</PageTotal>
          <svg width="10" height="12" viewBox="0 0 10 12" fill="none" stroke="#ddd" strokeWidth="1.500">
            <path d="M3 2l4 4-4 4" />
          </svg>
        </Pager>
        <ViewGroup>
          <ViewBtn $w={28} $sep>
            <svg width="18" height="20" viewBox="0 0 18 20" fill="none" stroke="#888">
              <path d="M1 1h6v18H1zM11 1h6v18h-6zM2.500 5h3M2.500 8h3M2.500 11h3M2.500 14h3M12.500 5h3M12.500 8h3M12.500 11h3M12.500 14h3" />
            </svg>
          </ViewBtn>
          <ViewBtn $w={24} $active $end>
            <svg width="18" height="20" viewBox="0 0 18 20" fill="none" stroke="#ccc">
              <path d="M2 1h14v11H2zM2 14h14v6H2zM5 4h8M5 7h8M5 10h8M5 16h8M5 18h8" />
            </svg>
          </ViewBtn>
          <ViewBtn $w={32} $size={14}>−</ViewBtn>
          <ViewBtn $w={31}>100%</ViewBtn>
          <ViewBtn $w={30} $size={16}>+</ViewBtn>
        </ViewGroup>
      </StatusBar>

      <TaskBar>
        <StartBtn>
          <svg width="18" height="17" viewBox="0 0 18 17" fill="#fff">
            <path d="M0 2.500l7.500-1V8H0zM8.500 1.300L18 0v8H8.500zM0 9h7.500v6.500l-7.500-1zM8.500 9H18v8l-9.500-1.300z" />
          </svg>
        </StartBtn>
        <SearchBox>
          <svg width="20" height="20" viewBox="0 0 20 20" fill="none" stroke="#e0e0e0" strokeWidth="2.400">
            <circle cx="10" cy="10" r="8.500" />
          </svg>
          在这里输入你要搜索的内容
          <MicSlot>
            <svg width="12" height="18" viewBox="0 0 12 18" fill="none" stroke="#8b8b8b">
              <rect x="3" y="1" width="6" height="11" rx="3" />
              <path d="M1 8c0 7 10 7 10 0M6 14v3M3 17h6" />
            </svg>
          </MicSlot>
        </SearchBox>
        <TaskBtn $w={48}>
          <svg width="20" height="16" viewBox="0 0 20 16" fill="none" stroke="#e8e8e8" strokeWidth="1.200">
            <rect x="5" y="1" width="10" height="14" />
            <path d="M3 2.500H1v11h2M17 2.500h2v11h-2" />
          </svg>
        </TaskBtn>
        <TaskBtn $w={52}>
          <svg width="22" height="22" viewBox="0 0 22 22" fill="#e4e4e4">
            <path d="M2 2c3-2 7-1 8 3 1 3 1 5 1 6-4-1-8-1-9-4C1 5 1 3 2 2zM20 2c2 3 1 6-2 8-2 1-5 1-7 1 1-4 1-8 4-9 2-1 4-1 5 0zM20 20c-3 2-7 1-8-3-1-3-1-5-1-6 4 1 8 1 9 4 1 2 1 4 0 5zM2 20c-2-3-1-6 2-8 2-1 5-1 7-1-1 4-1 8-4 9-2 1-4 1-5 0z" />
          </svg>
        </TaskBtn>
        <TaskBtn $w={52}>
          <svg width="24" height="24" viewBox="0 0 24 24" fill="none" stroke="#f0f0f0" strokeWidth="2.500">
            <path d="M7 12h12c0-4-3-7-7-7s-7 4-7 8 3 7 7 7c3 0 5-1 6-3" />
            <path d="M20 3c-4-2-12 3-15 10-2 6-1 9 2 8" strokeWidth="1.200" />
          </svg>
        </TaskBtn>
        <TaskBtn $w={44}>
          <svg width="28" height="28" viewBox="0 0 28 28" fill="none" stroke="#cfcfcf" strokeWidth="1.300">
            <path d="M13 7a8 8 0 1 0 5 13M12 11a4 4 0 1 0 4 6c1-3-2-4-3-3" />
            <path d="M20 1c3 0 4 2 4 5s1 4 2 5H14c1-1 2-2 2-5s1-5 4-5z" fill="#e8a62a" stroke="none" />
          </svg>
        </TaskBtn>
        <TaskDivider />
        <TaskBtn $w={40} $active>
          <AppTile $w={24} $bg="linear-gradient(135deg, #47b1f0, #1565c0)">
            <svg width="18" height="30" viewBox="0 0 18 30" fill="none" stroke="#fff">
              <path d="M2 10c3-1 5-1 7 1 2-2 4-2 7-1v9c-3-1-5-1-7 1-2-2-4-2-7-1zM9 11v9" />
            </svg>
          </AppTile>
        </TaskBtn>
        <TaskBtn $w={47} $gap={5} $pressed>
          <AppTile $w={24} $bg="linear-gradient(#d88a3c, #a9570f)">PDF</AppTile>
        </TaskBtn>
        <Spacer />
        <ScrollWidget>
          <svg width="10" height="7" viewBox="0 0 10 7" fill="none" stroke="#444" strokeWidth="2">
            <path d="M1 6l4-4 4 4" />
          </svg>
          <svg width="10" height="7" viewBox="0 0 10 7" fill="none" stroke="#444" strokeWidth="2">
            <path d="M1 1l4 4 4-4" />
          </svg>
        </ScrollWidget>
        <TrayDivider />
        <Tray $w={49}>链接</Tray>
        <Tray $w={60}>
          <div>31%</div>
          <div>CPU使用</div>
        </Tray>
        <Tray $w={22} $gap={8}>
          <svg width="14" height="9" viewBox="0 0 14 9" fill="none" stroke="#eee" strokeWidth="1.300">
            <path d="M1 8l6-6 6 6" />
          </svg>
        </Tray>
        <Tray $w={26}>
          <svg width="17" height="14" viewBox="0 0 17 14" fill="none" stroke="#eee">
            <rect x="1" y="5" width="13" height="8" />
            <rect x="3" y="7" width="8" height="4" fill="#eee" />
            <path d="M15 7.500h1.500v3H15M3 1v4M7 1v4" />
          </svg>
        </Tray>
        <Tray $w={24}>
          <svg width="16" height="14" viewBox="0 0 16 14" fill="none" stroke="#ddd">
            <path d="M1 7c3-4 7-6 14-6M3 9.500c2-3 5-4.500 12-5M5.500 12c1.500-2 3-3 9.500-4" strokeDasharray="2 1" />
            <circle cx="11" cy="12" r="1.500" fill="#ddd" />
          </svg>
        </Tray>
        <Tray $w={22}>
          <svg width="17" height="14" viewBox="0 0 17 14" fill="none" stroke="#eee">
            <path d="M1 5h3l4-4v12l-4-4H1zM11 4c1 2 1 4 0 6M14 2c2 3 2 7 0 10" />
          </svg>
        </Tray>
        <Tray $w={34}>
          <svg width="23" height="14" viewBox="0 0 23 14" fill="none" stroke="#eee">
            <rect x="0.500" y="0.500" width="22" height="13" />
            <path d="M3 4h17M3 7h17M6 10.500h11" strokeDasharray="1 1" />
          </svg>
        </Tray>
        <Tray $w={22} $size={13}>中</Tray>
        <Tray $w={36}>
          <svg width="16" height="18" viewBox="0 0 16 18">
            <rect x="1" y="1" width="14" height="16" rx="3" fill="#f0541a" transform="rotate(-6 8 9)" />
            <path d="M12 5H6.500C5 5 5 8 6.500 8h3c2 0 2 4 0 4H4" fill="none" stroke="#fff" strokeWidth="2" />
          </svg>
        </Tray>
        <Tray $w={72}>
          <div>9:37</div>
          <div>2018/5/27</div>
        </Tray>
        <Tray $w={42}>
          <svg width="17" height="17" viewBox="0 0 17 17" fill="none" stroke="#eee" strokeWidth="1.200">
            <path d="M1 1h15v12h-5l-2.500 3L6 13H1z" />
          </svg>
        </Tray>
        <Spacer $w={12} />
      </TaskBar>
    </Shell>
  );
}
